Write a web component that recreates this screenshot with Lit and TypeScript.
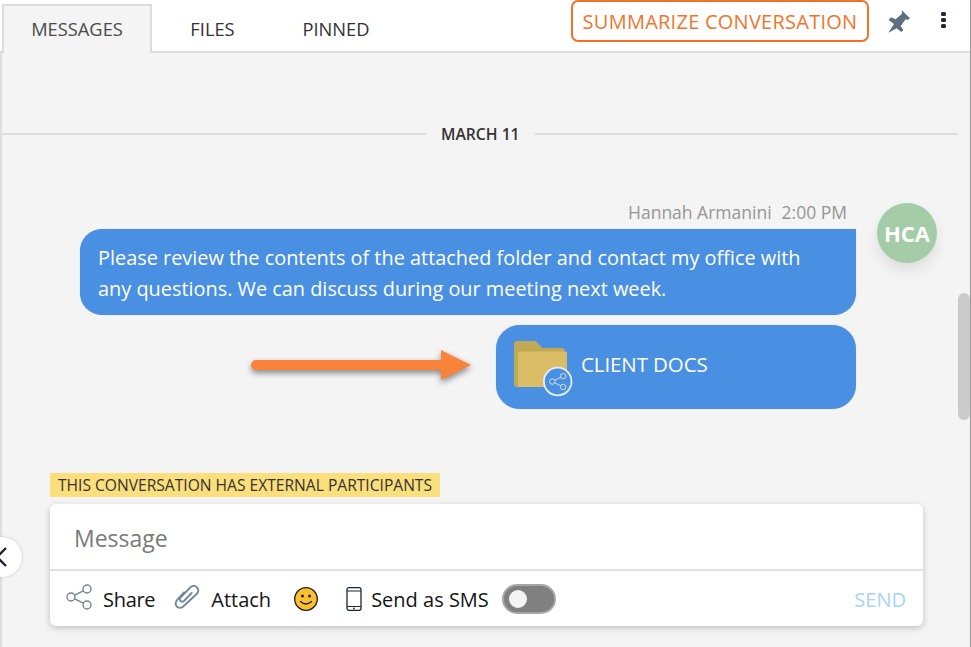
import { LitElement, html, css, svg } from "lit";
import { customElement } from "lit/decorators.js";

const shareIcon = (c: string, w: number) => svg`<g fill="none" stroke="${c}" stroke-width="${w}"><circle cx="5" cy="13" r="4"/><circle cx="21" cy="5" r="4"/><circle cx="21" cy="21" r="4"/><path d="M8.600 11.200 17.400 6.800M8.600 14.800l8.800 4.400"/></g>`;

@customElement("app-root")
export class AppRoot extends LitElement {
  static styles = css`
    :host { display: block; width: 971px; height: 647px; position: relative; overflow: hidden; background: #f4f4f4;
      font-family: "Open Sans", sans-serif; color: #222; box-sizing: border-box; padding: 0 1px 0 2px; box-shadow: inset 2px 0 #dedede, inset -1px 0 #9a9a9a; }
    * { box-sizing: border-box; }
    .top { height: 53px; background: #fff; border-bottom: 2px solid #dcdcdc; display: flex; align-items: flex-end; margin-left: -2px; padding-left: 2px; }
    .tab { height: 47px; margin-bottom: -2px; font-size: 18.300px; display: flex; align-items: center; justify-content: center; color: #333; padding-bottom: 3px; }
    .tab.active { width: 150px; height: 49px; background: #f4f4f4; border: 2px solid #dcdcdc; border-bottom: 0; color: #4a4a4a; }
    .tab.files { width: 121px; } .tab.pinned { width: 82px; margin-left: 22px; }
    .spacer { flex: 1; }
    .actions { align-self: flex-start; display: flex; align-items: center; }
    .summ { height: 42px; width: 298px; border: 2px solid #ec7428; border-radius: 7px; color: #f0752a; font-size: 20px; display: flex; align-items: center; justify-content: center; background: #fff; letter-spacing: 0.25px; }
    .pin { width: 24px; height: 24px; margin-left: 18px; display: block; }
    .dots { width: 8px; margin-left: 30px; margin-right: 21px; display: flex; flex-direction: column; gap: 2px; margin-top: -2px; }
    .dots i { display: block; width: 4.500px; height: 4.300px; background: #1c2733; border-radius: 1.500px; }
    .divider { display: flex; align-items: center; height: 20px; margin-top: 71px; padding-right: 12px; gap: 15px; font-size: 15.700px; font-weight: 600; color: #333; }
    .divider::before, .divider::after { content: ""; flex: 1 1 0; height: 2px; background: #dcdcdc; }
    .divider::before { flex: 0 0 424px; }
    .thread { display: grid; grid-template-columns: 1fr 60px; column-gap: 21px; margin: 0 33px 0 78px; padding-top: 63px; }
    .msgs { display: flex; flex-direction: column; align-items: flex-end; }
    .meta { font-size: 17.500px; color: #969696; height: 28px; margin-top: -6px; margin-right: 9px; display: flex; gap: 10px; line-height: 23px; }
    .bubble { background: #4a90e2; color: #fff; font-size: 19.900px; line-height: 31px; width: 776px; height: 86px; padding: 13px 30px 13px 18px; border-radius: 22px 0 22px 22px; box-shadow: 0 0 1px rgba(40,80,130,.4); }
    .folder { margin-top: 10px; width: 360px; height: 84px; border-radius: 24px; background: #4a90e2; color: #fff; display: flex; align-items: center; font-size: 20.500px; padding-left: 17px; box-shadow: 0 0 1px rgba(40,80,130,.4); gap: 7px; }
    .folder svg { width: 61px; height: 60px; flex: none; }
    .folder span { margin-top: -6px; letter-spacing: -0.1px; }
    .avatar { width: 60px; height: 60px; border-radius: 50%; background: #a3cca7; color: #fff; font-weight: 700; font-size: 22px; display: flex; align-items: center; justify-content: center; box-shadow: 0 8px 14px rgba(0,0,0,.09); margin-top: -4px; grid-column: 2; grid-row: 1; }
    .banner { margin: 64px 0 0 48px; width: 390px; height: 24px; background: #fbdf7c; font-size: 15.600px; line-height: 24px; padding-left: 8px; color: #333; white-space: nowrap; }
    .card { margin: 7px 0 0 48px; width: 873px; height: 122px; background: #fff; border-radius: 6px; box-shadow: 0 2px 6px rgba(0,0,0,.22); display: flex; flex-direction: column; }
    .input { height: 67px; border-bottom: 2px solid #e0e0e0; padding: 17px 0 0 24px; font-size: 23px; color: #7a7a7a; line-height: 34px; }
    .tools { flex: 1; display: flex; align-items: center; padding: 1px 17px 0 16px; font-size: 20px; color: #141414; }
    .tools svg { display: block; flex: none; }
    .share-label { letter-spacing: -0.3px; }
    .s1 { margin: -4px 11px 0 0; } .s2 { margin: -2px 10px 0 19px; } .s3 { margin: 0 0 0 22px; } .s4 { margin: 0 9px 0 27px; }
    .toggle { margin-left: 13px; width: 54px; height: 30px; border-radius: 15px; background: #808080; border: 2px solid #a6a6a6; display: flex; align-items: center; padding-left: 5px; }
    .toggle i { width: 18px; height: 18px; border-radius: 50%; background: #f4f4f4; display: block; }
    .send { margin-left: auto; color: #a9d3fb; font-size: 20px; }
    .scroll { position: absolute; right: 1px; top: 293px; width: 12px; height: 127px; background: #cbcbcb; border-radius: 6px; }
    .back { position: absolute; left: -30px; top: 537px; width: 52px; height: 40px; border-radius: 20px; background: #fff; box-shadow: 0 0 3px rgba(0,0,0,.2); }
    .back svg { position: absolute; left: 26px; top: 10px; width: 12px; height: 20px; }
    .arrow { position: absolute; left: 248px; top: 345px; width: 228px; height: 40px; filter: drop-shadow(0 3px 3px rgba(0,0,0,.45)); }
  `;

  render() {
    return html`
      <div class="top">
        <div class="tab active">MESSAGES</div>
        <div class="tab files">FILES</div>
        <div class="tab pinned">PINNED</div>
        <div class="spacer"></div>
        <div class="actions">
          <div class="summ">SUMMARIZE CONVERSATION</div>
          <svg class="pin" viewBox="21 27 72 72"><path fill="#5c6f80" d="M65 30 90 55 83 60 77 58 62 78 70 90 64 96 50 85 25 98 42 72 26 60 33 52 47 58 66 41z"/></svg>
          <div class="dots"><i></i><i></i><i></i></div>
        </div>
      </div>
      <div class="divider">MARCH 11</div>
      <div class="thread">
        <div class="msgs">
          <div class="meta"><span>Hannah Armanini</span><span>2:00 PM</span></div>
          <div class="bubble">Please review the contents of the attached folder and contact my office with any questions. We can discuss during our meeting next week.</div>
          <div class="folder">
            <svg viewBox="0 0 61 60">
              <path fill="#c1a956" d="M1 7q0-3 3-3h17q1.500 0 2.500 1l6 6h19q3 0 3 3v36H4q-3 0-3-3z"/>
              <path fill="#dabd64" d="M5 16.500q0-2 2-2h45q2 0 2 2V48q0 2-2 2H5z"/>
              <circle cx="44.700" cy="44.500" r="13.800" fill="#4a90e2" stroke="#e4edf8" stroke-width="1.800"/>
              <g transform="translate(35.900 35.700) scale(.68)">${shareIcon("#dbe8f8", 1.300)}</g>
            </svg>
            <span>CLIENT DOCS</span>
          </div>
        </div>
        <div class="avatar">HCA</div>
      </div>
      <div class="banner">THIS CONVERSATION HAS EXTERNAL PARTICIPANTS</div>
      <div class="card">
        <div class="input">Message</div>
        <div class="tools">
          <svg class="s1" width="26" height="26" viewBox="0 0 26 26">${shareIcon("#71869a", 1.400)}</svg>
          <span class="share-label">Share</span>
          <svg class="s2" width="27" height="27" viewBox="342 18 81 81"><path fill="none" stroke="#71869a" stroke-width="5.500" stroke-linecap="round" d="M372 40 352 62C340 76 352 92 368 84L410 45C422 32 408 14 392 24L362 55C355 63 364 72 372 66L395 42"/></svg>
          <span>Attach</span>
          <svg class="s3" width="26" height="26" viewBox="0 0 26 26"><circle cx="13" cy="13" r="11.300" fill="#fcc02e" stroke="#1d1d1d" stroke-width="1.300"/><circle cx="9.500" cy="10" r="1.500" fill="#1d1d1d"/><circle cx="16.500" cy="10" r="1.500" fill="#1d1d1d"/><path d="M7.500 15.500q5.500 5 11 0" fill="none" stroke="#1d1d1d" stroke-width="1.300" stroke-linecap="round"/></svg>
          <svg class="s4" width="16" height="24" viewBox="0 0 16 24"><rect x="1" y=".7" width="14" height="22.600" rx="2" fill="none" stroke="#1c2733" stroke-width="1.300"/><path d="M1 4h14M1 19.500h14" stroke="#1c2733" stroke-width="1"/><circle cx="8" cy="21.500" r=".9" fill="#1c2733"/></svg>
          <span>Send as SMS</span>
          <div class="toggle"><i></i></div>
          <span class="send">SEND</span>
        </div>
      </div>
      <div class="scroll"></div>
      <div class="back"><svg viewBox="0 0 12 20"><path d="M10 1 1 10l9 9" fill="none" stroke="#1c2733" stroke-width="2.400"/></svg></div>
      <svg class="arrow" viewBox="0 0 228 40"><path fill="#f9833a" d="M8 15h185V5l30 15-30 15V25H8a5 5 0 0 1 0-10z"/></svg>
    `;
  }
}
